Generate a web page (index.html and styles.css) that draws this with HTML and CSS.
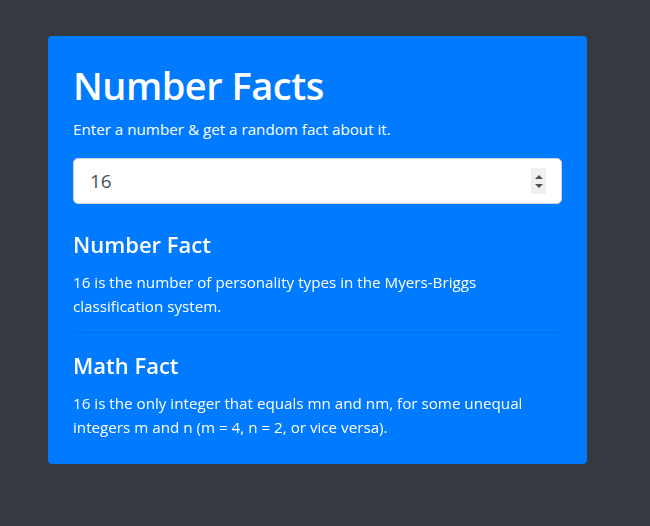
FILE: index.html
```html
<!DOCTYPE html>
<html>
<head>
<meta charset="utf-8">
<link rel="stylesheet" href="styles.css">
</head>
<body>
<main class="card">
  <h1 class="title">Number Facts</h1>
  <p class="lead">Enter a number &amp; get a random fact about it.</p>
  <div class="field">
    <input class="num" type="text" value="16" autofocus>
    <span class="spin"><span class="up"></span><span class="down"></span></span>
  </div>
  <section class="fact">
    <h2>Number Fact</h2>
    <p>16 is the number of personality types in the Myers-Briggs classification system.</p>
  </section>
  <hr class="sep">
  <section class="fact">
    <h2>Math Fact</h2>
    <p>16 is the only integer that equals mn and nm, for some unequal integers m and n (m = 4, n = 2, or vice versa).</p>
  </section>
</main>
</body>
</html>
```
FILE: styles.css
```css
html, body {
  margin: 0;
  padding: 0;
  background: #343a40;
  height: 100%;
}
body {
  font-family: "Open Sans", "Noto Sans", sans-serif;
  color: #fff;
  padding: 36px 0 0 48px;
  box-sizing: border-box;
}
.card {
  width: 539px;
  box-sizing: border-box;
  background: #007bff;
  border-radius: 4px;
  padding: 25px 25px 25px;
}
.title {
  margin: 0;
  font-size: 38px;
  font-weight: 600;
  line-height: 48px;
  letter-spacing: -0.5px;
}
.lead {
  margin: 8px 0 17px;
  font-size: 15.2px;
  line-height: 24px;
}
.field {
  display: flex;
  align-items: center;
  height: 46px;
  box-sizing: border-box;
  background: #fff;
  border: 1px solid #ced4da;
  border-radius: 5px;
  padding: 0 15px 0 16px;
}
.num {
  flex: 1;
  border: 0;
  outline: none;
  font-family: inherit;
  font-size: 19px;
  color: #495057;
  padding: 0;
  background: transparent;
  caret-color: #222;
}
.spin {
  display: flex;
  flex-direction: column;
  justify-content: center;
  align-items: center;
  gap: 5px;
  width: 15px;
  height: 26px;
  background: #f0f0f0;
}
.up, .down {
  width: 0;
  height: 0;
  border-left: 4px solid transparent;
  border-right: 4px solid transparent;
}
.up { border-bottom: 4px solid #505050; }
.down { border-top: 4px solid #505050; }
.fact h2 {
  margin: 0;
  font-size: 22px;
  font-weight: 600;
  line-height: 28px;
}
.fact p {
  margin: 0;
  font-size: 15.2px;
  line-height: 24px;
}
.fact:first-of-type { margin-top: 26px; }
.fact h2 + p { margin-top: 12px; }
.sep {
  border: 0;
  border-top: 1px solid rgba(0,0,0,0.1);
  margin: 14px 0 18px;
}
```
